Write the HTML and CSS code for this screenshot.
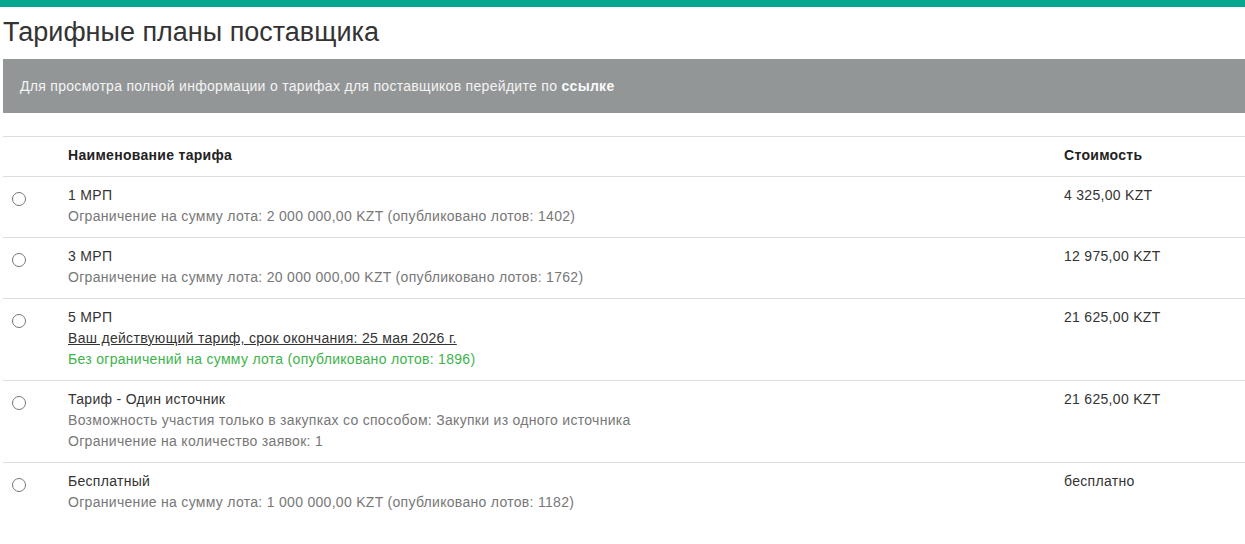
FILE: index.html
```html
<!DOCTYPE html>
<html lang="ru">
<head>
<meta charset="utf-8">
<title>Тарифные планы поставщика</title>
<link rel="stylesheet" href="styles.css">
</head>
<body>
<div class="topbar"></div>
<div class="page">
  <h1 class="title">Тарифные планы поставщика</h1>
  <div class="banner">Для просмотра полной информации о тарифах для поставщиков перейдите по <b>ссылке</b></div>
  <table class="plans">
    <thead>
      <tr>
        <th class="c-radio"></th>
        <th class="c-name">Наименование тарифа</th>
        <th class="c-price">Стоимость</th>
      </tr>
    </thead>
    <tbody>
      <tr>
        <td class="c-radio"><input type="radio" name="plan" class="radio"></td>
        <td class="c-name">
          <div class="name">1 МРП</div>
          <div class="sub">Ограничение на сумму лота: 2 000 000,00 KZT (опубликовано лотов: 1402)</div>
        </td>
        <td class="c-price">4 325,00 KZT</td>
      </tr>
      <tr>
        <td class="c-radio"><input type="radio" name="plan" class="radio"></td>
        <td class="c-name">
          <div class="name">3 МРП</div>
          <div class="sub">Ограничение на сумму лота: 20 000 000,00 KZT (опубликовано лотов: 1762)</div>
        </td>
        <td class="c-price">12 975,00 KZT</td>
      </tr>
      <tr>
        <td class="c-radio"><input type="radio" name="plan" class="radio"></td>
        <td class="c-name">
          <div class="name">5 МРП</div>
          <div class="current">Ваш действующий тариф, срок окончания: 25 мая 2026 г.</div>
          <div class="unlimited">Без ограничений на сумму лота (опубликовано лотов: 1896)</div>
        </td>
        <td class="c-price">21 625,00 KZT</td>
      </tr>
      <tr>
        <td class="c-radio"><input type="radio" name="plan" class="radio"></td>
        <td class="c-name">
          <div class="name">Тариф - Один источник</div>
          <div class="sub">Возможность участия только в закупках со способом: Закупки из одного источника</div>
          <div class="sub">Ограничение на количество заявок: 1</div>
        </td>
        <td class="c-price">21 625,00 KZT</td>
      </tr>
      <tr class="last">
        <td class="c-radio"><input type="radio" name="plan" class="radio"></td>
        <td class="c-name">
          <div class="name">Бесплатный</div>
          <div class="sub">Ограничение на сумму лота: 1 000 000,00 KZT (опубликовано лотов: 1182)</div>
        </td>
        <td class="c-price">бесплатно</td>
      </tr>
    </tbody>
  </table>
</div>
</body>
</html>
```

FILE: styles.css
```css
html, body {
  margin: 0;
  padding: 0;
  background: #fff;
}
body {
  font-family: "Liberation Sans", Arial, sans-serif;
  font-size: 14px;
  letter-spacing: 0.3px;
  color: #333;
}
.topbar {
  height: 7px;
  background: #05a68f;
}
.page {
  padding-left: 3px;
}
.title {
  margin: 10px 0 11px;
  font-size: 27px;
  font-weight: normal;
  line-height: 31px;
  letter-spacing: 0;
  color: #333;
}
.banner {
  background: #939697;
  color: #f4f4f4;
  padding: 17px 17px;
  line-height: 20px;
  margin-bottom: 23px;
}
.banner b {
  font-weight: bold;
  color: #fafafa;
}
.plans {
  width: 1242px;
  border-collapse: collapse;
  table-layout: fixed;
}
.plans th,
.plans td {
  border-top: 1px solid #ddd;
  padding: 8px 8px 10px;
  line-height: 21px;
  text-align: left;
  vertical-align: top;
}
.plans th {
  font-weight: bold;
  color: #222;
}
.c-radio {
  width: 41px;
}
.c-name {
  width: auto;
}
.c-price {
  width: 173px;
}
.radio {
  display: block;
  width: 14px;
  height: 14px;
  margin: 7px 0 0 1px;
}
.name {
  color: #333;
}
.sub {
  color: #777;
}
.current {
  color: #333;
  text-decoration: underline;
}
.unlimited {
  color: #3cb44a;
}
.c-price {
  color: #333;
}
```
